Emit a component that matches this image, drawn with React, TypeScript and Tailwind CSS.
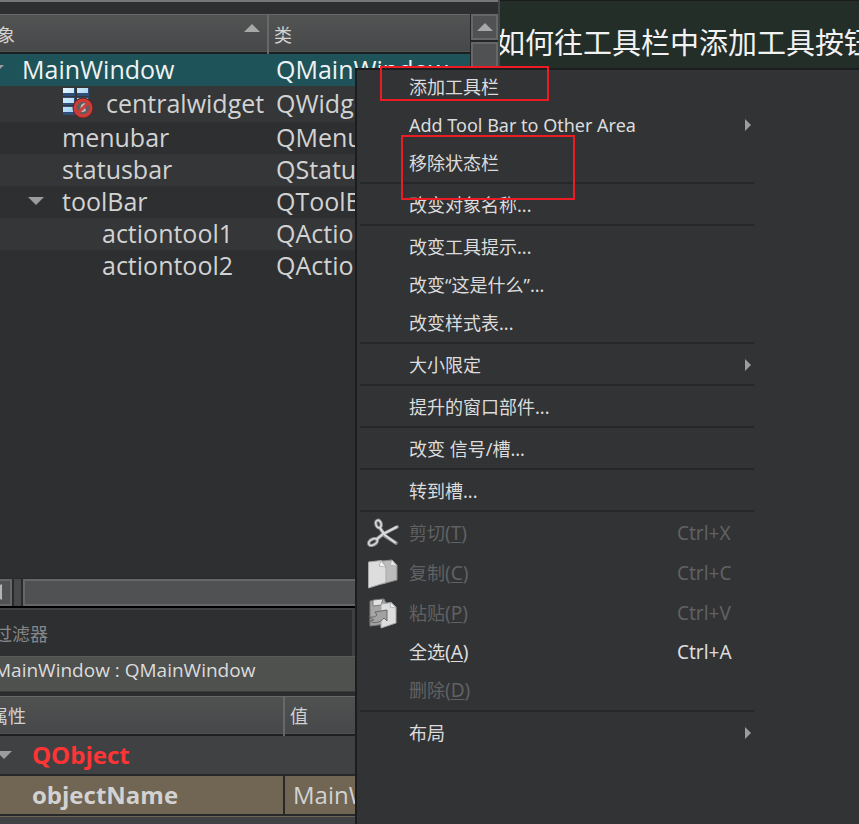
import type { ReactNode } from "react";

type TreeRow = { name: string; cls: string; row: string; pad: string; expandable?: boolean; icon?: boolean };

const tree: TreeRow[] = [
  { name: "MainWindow", cls: "QMainWindow", row: "h-[33px] bg-[#1d5359] text-[#f0f2f2]", pad: "pl-[22px]", expandable: true },
  { name: "centralwidget", cls: "QWidget", row: "h-9 bg-[#343638]", pad: "pl-[62px]", icon: true },
  { name: "menubar", cls: "QMenuBar", row: "h-8 bg-[#2d2f31]", pad: "pl-[62px]" },
  { name: "statusbar", cls: "QStatusBar", row: "h-8 bg-[#343638]", pad: "pl-[62px]" },
  { name: "toolBar", cls: "QToolBar", row: "h-8 bg-[#2d2f31]", pad: "pl-[62px]", expandable: true },
  { name: "actiontool1", cls: "QAction", row: "h-8 bg-[#343638]", pad: "pl-[102px]" },
  { name: "actiontool2", cls: "QAction", row: "h-8 bg-[#2d2f31]", pad: "pl-[102px]" },
];

type Item = { label: string; mnemonic?: string; shortcut?: string; submenu?: boolean; disabled?: boolean; icon?: ReactNode };

function Down({ className }: { className: string }) {
  return (
    <svg viewBox="0 0 16 8" className={`h-2 w-4 ${className}`} fill="#9c9c9c" aria-hidden="true">
      <path d="M0 0h16L8 8z" />
    </svg>
  );
}

function Up() {
  return (
    <svg viewBox="0 0 16 8" className="h-2 w-4" fill="#a8a8a8" aria-hidden="true">
      <path d="M0 8h16L8 0z" />
    </svg>
  );
}

function WidgetIcon() {
  return (
    <svg viewBox="0 0 32 32" className="h-8 w-8 shrink-0" aria-hidden="true">
      <defs>
        <linearGradient id="bar" x1="0" y1="0" x2="1" y2="1">
          <stop offset="0" stopColor="#e6f6ff" />
          <stop offset="1" stopColor="#8cc4ee" />
        </linearGradient>
      </defs>
      <g fill="#2f4f78">
        <path d="M1 1h12v8H1zM15 1h12v8H15zM1 10h12v8H1zM15 10h12v8H15zM1 19h12v9H1z" />
      </g>
      <g fill="url(#bar)">
        <path d="M1 1h11v5H1zM15 1h11v5H15zM1 11h11v5H1zM15 11h11v5H15zM1 20h11v5H1z" />
      </g>
      <circle cx="21" cy="21" r="10.500" fill="#5a2626" />
      <circle cx="21" cy="21" r="9.500" fill="#d23a36" />
      <circle cx="21" cy="21" r="6.300" fill="#5c5e60" />
      <path d="M18 25l1-7 3-2 2 1-1 4 1 3-3 1z" fill="#b9bcbf" />
      <path d="M16.500 25.500l9-9" stroke="#d23a36" strokeWidth="3" />
    </svg>
  );
}

function CutIcon() {
  return (
    <svg viewBox="0 0 32 32" className="h-8 w-8" fill="none" aria-hidden="true">
      <g stroke="#8e8e8e" strokeLinecap="round">
        <ellipse cx="11.500" cy="6" rx="2.600" ry="3.800" strokeWidth="3.400" transform="rotate(-15 11.500 6)" />
        <ellipse cx="6" cy="24" rx="4.600" ry="2.800" strokeWidth="3.400" transform="rotate(-30 6 24)" />
        <path d="M13 10l5 8 11 7" strokeWidth="3.600" />
        <path d="M10 21l6-5 14-7" strokeWidth="3.600" />
      </g>
      <g stroke="#dcdcdc" strokeLinecap="round">
        <path d="M13 10l5 7 10 7.500" strokeWidth="2" />
        <path d="M10 21l6-5 13.500-7" strokeWidth="2" />
        <ellipse cx="6" cy="24" rx="4.600" ry="2.800" strokeWidth="1.400" transform="rotate(-30 6 24)" />
        <ellipse cx="11.500" cy="6" rx="2.600" ry="3.800" strokeWidth="1.400" transform="rotate(-15 11.500 6)" />
      </g>
    </svg>
  );
}

function CopyIcon() {
  return (
    <svg viewBox="0 0 32 32" className="h-8 w-8" aria-hidden="true">
      <path d="M15 3l10-1 5 5v15l-15 4z" fill="#bcbcbc" stroke="#8a8a8a" />
      <path d="M25 2l-2 5 7 1z" fill="#e8e8e8" stroke="#9a9a9a" strokeWidth=".5" />
      <path d="M1.500 4l13-1.500 4.500 6v16L1.500 30z" fill="#dddddd" stroke="#a8a8a8" />
      <path d="M14 3l-2 5 7 1z" fill="#f6f6f6" stroke="#a0a0a0" strokeWidth=".7" />
    </svg>
  );
}

function PasteIcon() {
  return (
    <svg viewBox="0 0 32 32" className="h-8 w-8" aria-hidden="true">
      <path d="M3 3l14-2 2 4v21L3 28z" fill="#a6a6a6" stroke="#7c7c7c" />
      <path d="M6 2l10-1-2 6-8 1z" fill="#e2e2e2" stroke="#6c6c6c" strokeWidth=".8" />
      <path d="M14 6l10-1.500L29 9v16l-15 5z" fill="#dedede" stroke="#a8a8a8" />
      <path d="M24 4.500L23 9l6 1z" fill="#f5f5f5" stroke="#a0a0a0" strokeWidth=".7" />
      <path d="M2 18c3 2 6 1 8-1l-2-3 12-2v11l-3-3c-4 5-10 6-15 3l5-1c-2-1-4-2-5-4z" fill="#a2a2a2" stroke="#686868" />
    </svg>
  );
}

const groups: Item[][] = [
  [{ label: "添加工具栏" }, { label: "Add Tool Bar to Other Area", submenu: true }, { label: "移除状态栏" }],
  [{ label: "改变对象名称..." }],
  [{ label: "改变工具提示..." }, { label: "改变“这是什么”..." }, { label: "改变样式表..." }],
  [{ label: "大小限定", submenu: true }],
  [{ label: "提升的窗口部件..." }],
  [{ label: "改变 信号/槽..." }],
  [{ label: "转到槽..." }],
  [
    { label: "剪切", mnemonic: "T", shortcut: "Ctrl+X", disabled: true, icon: <CutIcon /> },
    { label: "复制", mnemonic: "C", shortcut: "Ctrl+C", disabled: true, icon: <CopyIcon /> },
    { label: "粘贴", mnemonic: "P", shortcut: "Ctrl+V", disabled: true, icon: <PasteIcon /> },
    { label: "全选", mnemonic: "A", shortcut: "Ctrl+A" },
    { label: "删除", mnemonic: "D", disabled: true },
  ],
  [{ label: "布局", submenu: true }],
];

function MenuItem({ item }: { item: Item }) {
  return (
    <button
      type="button"
      role="menuitem"
      disabled={item.disabled}
      className={`flex w-full items-center text-left text-lg ${item.icon ? "h-10" : "h-[38px]"} ${item.disabled ? "text-[#606162]" : "text-[#dcdcdc]"}`}
    >
      <span className="w-[49px] shrink-0 pl-[7px]">{item.icon}</span>
      <span className="flex-1 whitespace-nowrap">
        {item.label}
        {item.mnemonic && (
          <span className="text-[19px]">
            (<u className="underline-offset-2">{item.mnemonic}</u>)
          </span>
        )}
      </span>
      {item.shortcut && <span className="w-[77px] text-[19px]">{item.shortcut}</span>}
      {item.submenu && (
        <svg viewBox="0 0 6 12" className="mr-[3px] h-3 w-[6px]" fill="#9c9c9c" aria-hidden="true">
          <path d="M0 0l6 6-6 6z" />
        </svg>
      )}
    </button>
  );
}

function ContextMenu() {
  return (
    <div
      role="menu"
      className="absolute top-[68px] right-0 bottom-0 left-[355px] overflow-hidden bg-[#323335] pl-[5px] font-['Noto_Sans','Noto_Sans_CJK_SC',sans-serif] shadow-[inset_2px_2px_0_#1c1d1e]"
    >
      <div className="w-full max-w-[394px]">
        {groups.map((group, i) => (
          <div key={i}>
            {i > 0 && <div role="separator" className="h-1 border-t-2 border-[#262728]" />}
            {group.map((item) => (
              <MenuItem key={item.label} item={item} />
            ))}
          </div>
        ))}
      </div>
    </div>
  );
}

function ObjectTree() {
  return (
    <div className="flex min-h-0 flex-1">
      <table className="w-[470px] table-fixed border-collapse self-start text-[25px] text-[#d2d2d2]">
        <thead>
          <tr className="h-[38px] border-b-2 border-[#1d1e1f] bg-linear-to-b from-[#525353] to-[#474849] text-lg">
            <th className="w-[268px] border-t border-r-2 border-[#686868] p-0 pt-1 font-normal">
              <div className="flex items-start justify-between pr-[7px]">
                <span className="-ml-[3px]">象</span>
                <span className="pt-[3px]">
                  <Up />
                </span>
              </div>
            </th>
            <th className="border-t border-l-2 border-t-[#686868] border-l-[#3a3b3c] p-0 pt-1 pl-[5px] text-left font-normal">类</th>
          </tr>
        </thead>
        <tbody>
          {tree.map((r) => (
            <tr key={r.name} className={r.row}>
              <td className="p-0 pb-[2px]">
                <div className={`relative flex items-center leading-7 whitespace-nowrap ${r.pad}`}>
                  {r.expandable && <Down className={r.name === "toolBar" ? "absolute left-7" : "absolute -left-3"} />}
                  {r.icon && (
                    <span className="mr-3">
                      <WidgetIcon />
                    </span>
                  )}
                  {r.name}
                </div>
              </td>
              <td className="p-0 pb-[2px] pl-2 leading-7 whitespace-nowrap">{r.cls}</td>
            </tr>
          ))}
        </tbody>
      </table>
      <div className="flex flex-1 flex-col gap-[2px] border-l border-[#242526] bg-[#242526]">
        <button type="button" aria-label="Scroll up" className="flex h-[26px] items-center justify-center border-2 border-[#666768] bg-[#505152]">
          <Up />
        </button>
        <div className="flex-1 border-2 border-[#666768] bg-[#505152]" />
      </div>
    </div>
  );
}

export default function App() {
  return (
    <div className="relative flex h-screen min-h-[824px] w-full overflow-hidden bg-[#323335] font-['Open_Sans','Noto_Sans_CJK_SC',sans-serif]">
      <div className="flex w-[500px] shrink-0 flex-col border-r-2 border-[#454849] bg-[#2d2f31]">
        <div className="h-[14px] border-t-2 border-[#767878]" />
        <ObjectTree />
        <div className="flex h-7 gap-[2px] bg-[#292a2b] pt-px">
          <button type="button" aria-label="Scroll left" className="flex w-3 items-center border-2 border-l-0 border-[#666768] bg-[#505152]">
            <svg viewBox="0 0 2 16" className="h-4 w-[2px]" fill="#b4b4b4" aria-hidden="true">
              <path d="M0 1l2-1v16l-2-1z" />
            </svg>
          </button>
          <div className="w-[7px] bg-[#484949]" />
          <div className="flex-1 border-2 border-[#666768] bg-[#505152]" />
        </div>
        <div className="flex h-[50px] border-t-2 border-black bg-[#3f4042] pt-[2px]">
          <input
            aria-label="过滤器"
            placeholder="过滤器"
            className="-ml-[6px] w-[358px] bg-[#2d2f31] pt-[2px] text-lg text-[#dcdcdc] outline-none placeholder:text-[#85878a]"
          />
        </div>
        <div className="flex h-9 items-center border-y border-t-[#5a5c5a] border-b-[#3a3b3b] bg-[#4f514f] pb-[6px] text-[19px] whitespace-nowrap text-[#dcdcdc]">
          <span className="-ml-[6px]">MainWindow : QMainWindow</span>
        </div>
        <div className="h-1 bg-[#2b2c2d]" />
        <table className="w-full table-fixed border-collapse text-left text-2xl text-[#d2d2d2]">
          <thead>
            <tr className="h-[39px] border-b-2 border-[#1f2021] bg-linear-to-b from-[#505151] to-[#474849] text-lg">
              <th className="w-[284px] border-t border-r-2 border-[#686868] p-0 pt-[2px] font-normal">
                <span className="-ml-[10px]">属性</span>
              </th>
              <th className="border-t border-[#686868] p-0 pt-[2px] pl-[5px] font-normal">值</th>
            </tr>
          </thead>
          <tbody>
            <tr className="h-10 border-b-2 border-[#27282a] bg-[#404143]">
              <th colSpan={2} className="p-0 font-bold text-[#ff3434]">
                <div className="relative flex items-center pl-8 leading-8">
                  <Down className="absolute -left-1" />
                  QObject
                </div>
              </th>
            </tr>
            <tr className="h-10 border-b-2 border-[#27282a] bg-[#716553]">
              <th className="border-r-2 border-[#27282a] p-0 pl-8 leading-8 font-bold">objectName</th>
              <td className="p-0 pl-2 leading-8">MainWindow</td>
            </tr>
          </tbody>
        </table>
        <div className="h-2 border-t border-[#6a6456] bg-[#404143]" />
      </div>
      <header className="h-[68px] min-w-0 flex-1 overflow-hidden border-t border-[#1b1c1d] bg-[#232e29]">
        <h1 className="-ml-1 pt-5 text-[29px] leading-[44px] whitespace-nowrap text-[#f2f2f2]">如何往工具栏中添加工具按钮</h1>
      </header>
      <ContextMenu />
      <div className="absolute top-[66px] left-[380px] h-[35px] w-[169px] border-2 border-[#ed1c24]" />
      <div className="absolute top-[135px] left-[401px] h-[65px] w-[174px] border-2 border-[#ed1c24]" />
    </div>
  );
}
